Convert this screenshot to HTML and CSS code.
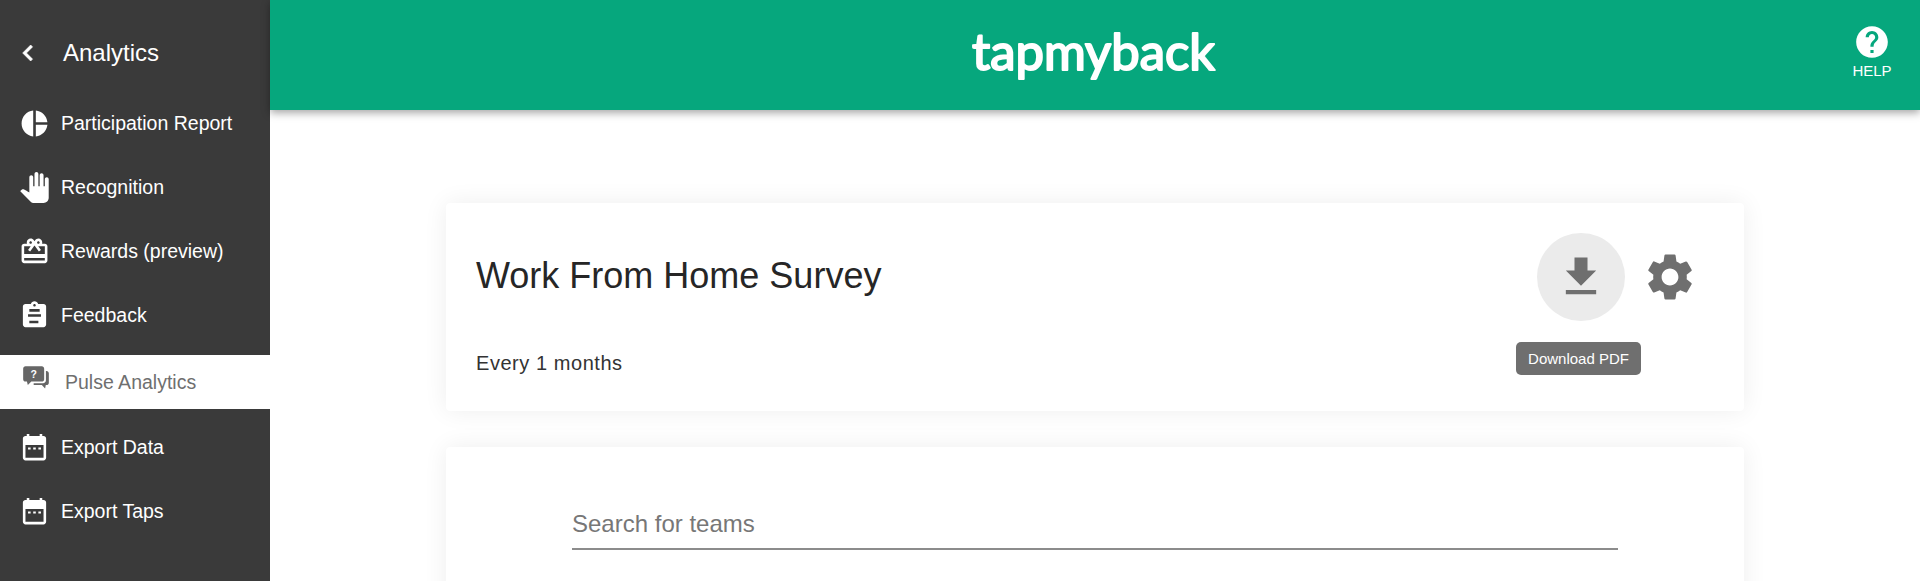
FILE: index.html
```html
<!DOCTYPE html>
<html lang="en">
<head>
    <meta charset="UTF-8">
    <meta name="viewport" content="width=device-width, initial-scale=1.0">
    <title>Pulse Analytics</title>
    <link rel="stylesheet" href="styles.css">
</head>
<body>
    <div class="app">
        <nav class="sidebar">
            <div class="sidebar-head">
                <svg class="back-icon" viewBox="0 0 24 24"><path d="M15.41 7.41 14 6l-6 6 6 6 1.41-1.41L10.83 12z"/></svg>
                <span>Analytics</span>
            </div>
            <a class="nav-item">
                <svg class="nav-icon" viewBox="0 0 24 24"><path d="M11 2v20c-5.07-.5-9-4.79-9-10s3.93-9.5 9-10zm2.03 0v8.99H22c-.47-4.74-4.24-8.52-8.97-8.99zm0 11.01V22c4.74-.47 8.5-4.25 8.97-8.99h-8.97z"/></svg>
                <span>Participation Report</span>
            </a>
            <a class="nav-item">
                <svg class="nav-icon" viewBox="0 0 24 24"><path d="M23 5.5V20c0 2.2-1.8 4-4 4h-7.3c-1.08 0-2.1-.43-2.85-1.19L1 14.83s1.26-1.23 1.3-1.25c.22-.19.49-.29.79-.29.22 0 .42.06.6.16.04.01 4.31 2.46 4.31 2.46V4c0-.83.67-1.5 1.5-1.5S11 3.17 11 4v7h1V1.5c0-.83.67-1.5 1.5-1.5S15 .67 15 1.5V11h1V2.5c0-.83.67-1.5 1.5-1.5s1.5.67 1.5 1.5V11h1V5.5c0-.83.67-1.5 1.5-1.5s1.5.67 1.5 1.5z"/></svg>
                <span>Recognition</span>
            </a>
            <a class="nav-item">
                <svg class="nav-icon" viewBox="0 0 24 24"><path d="M20 6h-2.18c.11-.31.18-.65.18-1 0-1.66-1.34-3-3-3-1.05 0-1.96.54-2.5 1.35l-.5.67-.5-.68C10.96 2.54 10.05 2 9 2 7.34 2 6 3.34 6 5c0 .35.07.69.18 1H4c-1.11 0-1.99.89-1.99 2L2 19c0 1.11.89 2 2 2h16c1.11 0 2-.89 2-2V8c0-1.11-.89-2-2-2zm-5-2c.55 0 1 .45 1 1s-.45 1-1 1-1-.45-1-1 .45-1 1-1zM9 4c.55 0 1 .45 1 1s-.45 1-1 1-1-.45-1-1 .45-1 1-1zm11 15H4v-2h16v2zm0-5H4V8h5.08L7 10.83 8.62 12 11 8.76l1-1.36 1 1.36L15.38 12 17 10.83 14.92 8H20v6z"/></svg>
                <span>Rewards (preview)</span>
            </a>
            <a class="nav-item">
                <svg class="nav-icon" viewBox="0 0 24 24"><path d="M19 3h-4.18C14.4 1.84 13.3 1 12 1c-1.3 0-2.4.84-2.82 2H5c-1.1 0-2 .9-2 2v14c0 1.1.9 2 2 2h14c1.1 0 2-.9 2-2V5c0-1.1-.9-2-2-2zm-7 0c.55 0 1 .45 1 1s-.45 1-1 1-1-.45-1-1 .45-1 1-1zm3 15H8v-2h7v2zm2-5H7v-2h10v2zm-1-4H8V7h8v2z"/></svg>
                <span>Feedback</span>
            </a>
            <a class="nav-item active">
                <svg class="nav-icon" viewBox="0 0 24 24"><path d="M3 2h14c1.100 0 2 .9 2 2v9c0 1.100-.9 2-2 2H8l-3 3-.8-3H3c-1.100 0-2-.9-2-2V4c0-1.100.9-2 2-2zm17.500 4h.5c1.100 0 2 .9 2 2v8c0 1.100-.9 2-2 2h-.6l-.6 3-2.800-3H10v-1.500h8c1.400 0 2.500-1.100 2.500-2.500z"/><text x="10" y="12" class="q-mark">?</text></svg>
                <span>Pulse Analytics</span>
            </a>
            <a class="nav-item">
                <svg class="nav-icon" viewBox="0 0 24 24"><path d="M9 12H7v1.500h2V12zm4 0h-2v1.500h2V12zm4 0h-2v1.500h2V12zm2-9h-1V1.500h-2V3H8V1.500H6V3H5c-1.100 0-2 .9-2 2v15c0 1.100.9 2 2 2h14c1.100 0 2-.9 2-2V5c0-1.100-.9-2-2-2zm0 17H5V10h14v10z"/></svg>
                <span>Export Data</span>
            </a>
            <a class="nav-item">
                <svg class="nav-icon" viewBox="0 0 24 24"><path d="M9 12H7v1.500h2V12zm4 0h-2v1.500h2V12zm4 0h-2v1.500h2V12zm2-9h-1V1.500h-2V3H8V1.500H6V3H5c-1.100 0-2 .9-2 2v15c0 1.100.9 2 2 2h14c1.100 0 2-.9 2-2V5c0-1.100-.9-2-2-2zm0 17H5V10h14v10z"/></svg>
                <span>Export Taps</span>
            </a>
        </nav>

        <div class="content">
            <header class="topbar">
                <svg class="logo" viewBox="0 0 250 60"><text x="2" y="50" textLength="243" lengthAdjust="spacingAndGlyphs" class="logo-text">tapmyback</text></svg>
                <a class="help">
                    <svg class="help-icon" viewBox="0 0 24 24"><path d="M12 2C6.480 2 2 6.480 2 12s4.480 10 10 10 10-4.480 10-10S17.520 2 12 2zm1 17h-2v-2h2v2zm2.070-7.750l-.9.920C13.450 12.900 13 13.500 13 15h-2v-.5c0-1.100.45-2.100 1.170-2.830l1.240-1.260c.37-.36.59-.86.59-1.410 0-1.100-.9-2-2-2s-2 .9-2 2H8c0-2.210 1.790-4 4-4s4 1.790 4 4c0 .88-.36 1.680-.93 2.250z"/></svg>
                    <span>HELP</span>
                </a>
            </header>

            <main class="main">
                <section class="card survey-card">
                    <div class="survey-row">
                        <h1 class="survey-title">Work From Home Survey</h1>
                        <div class="survey-actions">
                            <button class="icon-btn hovered">
                                <svg class="download-icon" viewBox="0 0 24 24"><path d="M19 9h-4V3H9v6H5l7 7 7-7zM5 18v2h14v-2H5z"/></svg>
                                <span class="tooltip">Download PDF</span>
                            </button>
                            <button class="icon-btn">
                                <svg class="gear-icon" viewBox="0 0 24 24"><path d="M19.140 12.940c.04-.3.06-.61.06-.94 0-.32-.02-.64-.07-.94l2.030-1.580c.18-.14.23-.41.12-.61l-1.920-3.320c-.12-.22-.37-.29-.59-.22l-2.390.96c-.5-.38-1.030-.7-1.620-.94l-.36-2.540c-.04-.24-.24-.41-.48-.41h-3.840c-.24 0-.43.17-.47.41l-.36 2.540c-.59.24-1.130.57-1.620.94l-2.390-.96c-.22-.08-.47 0-.59.22L2.740 8.870c-.12.21-.08.47.12.61l2.030 1.580c-.05.3-.09.63-.09.94s.02.64.07.94l-2.030 1.580c-.18.14-.23.41-.12.61l1.920 3.320c.12.22.37.29.59.22l2.390-.96c.5.38 1.030.7 1.620.94l.36 2.540c.05.24.24.41.48.41h3.840c.24 0 .44-.17.47-.41l.36-2.540c.59-.24 1.130-.56 1.620-.94l2.390.96c.22.08.47 0 .59-.22l1.920-3.320c.12-.22.07-.47-.12-.61l-2.010-1.580zM12 15.600c-1.980 0-3.600-1.620-3.600-3.600s1.620-3.600 3.600-3.600 3.600 1.620 3.600 3.600-1.620 3.600-3.600 3.600z"/></svg>
                            </button>
                        </div>
                    </div>
                    <p class="survey-freq">Every 1 months</p>
                </section>

                <section class="card search-card">
                    <input type="text" class="search-input" placeholder="Search for teams">
                </section>
            </main>
        </div>
    </div>
</body>
</html>
```

FILE: styles.css
```css
* {
    box-sizing: border-box;
}

body {
    margin: 0;
    font-family: "Liberation Sans", Arial, sans-serif;
    background-color: #fff;
}

.app {
    display: flex;
    height: 100vh;
    overflow: hidden;
}

/* Left menu */
.sidebar {
    width: 270px;
    flex-shrink: 0;
    background-color: #3a3a3a;
    color: #fff;
}

.sidebar-head {
    display: flex;
    align-items: center;
    height: 91px;
    padding: 14px 0 0 12px;
    font-size: 24px;
}

.back-icon {
    width: 32px;
    height: 32px;
    margin-right: 19px;
    fill: #fff;
    stroke: #fff;
    stroke-width: 0.5;
}

.nav-item {
    display: flex;
    align-items: center;
    height: 64px;
    padding-left: 21px;
    font-size: 19.5px;
    color: #fff;
}

.nav-icon {
    width: 31px;
    height: 31px;
    margin-right: 11px;
    margin-left: -2px;
    flex-shrink: 0;
    fill: #fff;
}

.nav-item.active {
    height: 54px;
    margin: 8px 0 6px;
    background-color: #fff;
    color: #6f6f6f;
}

.nav-item.active .nav-icon {
    width: 28px;
    height: 28px;
    margin-right: 15px;
    margin-left: 1px;
    margin-top: -8px;
    fill: #666;
}

.q-mark {
    font-size: 9px;
    font-weight: bold;
    text-anchor: middle;
    fill: #fff;
}

/* Top bar */
.content {
    flex: 1;
    min-width: 0;
    display: flex;
    flex-direction: column;
}

.topbar {
    position: relative;
    display: flex;
    align-items: center;
    justify-content: center;
    height: 110px;
    flex-shrink: 0;
    background-color: #06a77d;
    box-shadow: 0 3px 8px rgba(0, 0, 0, 0.35);
}

.logo {
    width: 250px;
    height: 60px;
    margin-bottom: 10px;
}

.logo-text {
    font-family: Lato, sans-serif;
    font-size: 50px;
    fill: #fff;
    stroke: #fff;
    stroke-width: 2px;
    stroke-linejoin: round;
}

.help {
    position: absolute;
    right: 22px;
    top: 23px;
    width: 52px;
    display: flex;
    flex-direction: column;
    align-items: center;
    color: #fff;
    font-size: 15px;
}

.help-icon {
    width: 38px;
    height: 38px;
    margin-bottom: 1px;
    fill: #fff;
}

/* Cards */
.main {
    flex: 1;
    width: 1298px;
    margin: 0 auto;
    padding-top: 93px;
}

.card {
    background-color: #fff;
    border-radius: 4px;
    box-shadow: 0 0 24px rgba(0, 0, 0, 0.07);
}

.survey-card {
    height: 208px;
    padding: 30px 30px 0;
    margin-bottom: 36px;
}

.survey-row {
    display: flex;
    align-items: center;
    justify-content: space-between;
}

.survey-title {
    margin: 0;
    padding-bottom: 3px;
    font-size: 36px;
    font-weight: normal;
    color: #262626;
}

.survey-actions {
    display: flex;
    gap: 1px;
}

.icon-btn {
    position: relative;
    display: flex;
    align-items: center;
    justify-content: center;
    width: 88px;
    height: 88px;
    padding: 0;
    border: none;
    border-radius: 50%;
    background: none;
}

.icon-btn.hovered {
    background-color: #ebebeb;
}

.download-icon {
    width: 52px;
    height: 52px;
    fill: #6f6f6f;
}

.gear-icon {
    width: 56px;
    height: 56px;
    fill: #6f6f6f;
}

.tooltip {
    position: absolute;
    top: 109px;
    left: -21px;
    width: 125px;
    height: 33px;
    line-height: 33px;
    border-radius: 5px;
    background-color: #6f6f6f;
    color: #fff;
    font-family: "Liberation Sans", Arial, sans-serif;
    font-size: 15px;
    text-align: center;
}

.survey-freq {
    margin: 31px 0 0;
    font-size: 20px;
    letter-spacing: 0.55px;
    color: #333;
}

.search-card {
    min-height: 400px;
    padding: 56px 126px 0;
}

.search-input {
    display: block;
    width: 100%;
    height: 47px;
    padding: 0 0 3px;
    border: none;
    border-bottom: 2px solid #8c8c8c;
    outline: none;
    font-family: "Liberation Sans", Arial, sans-serif;
    font-size: 24px;
    color: #333;
}

.search-input::placeholder {
    color: #777;
    opacity: 1;
}
```
